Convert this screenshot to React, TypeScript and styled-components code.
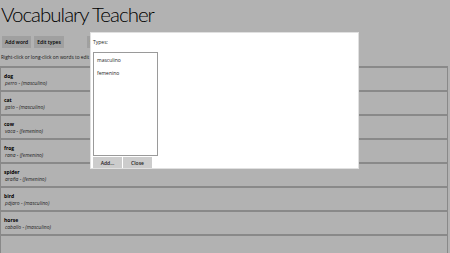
import React from "react";
import styled, { createGlobalStyle } from "styled-components";

const Global = createGlobalStyle`
  html, body { margin: 0; padding: 0; background: #ffffff; }
  body { font-family: "Open Sans", "Noto Sans", sans-serif; color: #000; overflow: hidden; }
`;

const Page = styled.div`
  position: relative;
  width: 450px;
  height: 253px;
  overflow: hidden;
  background: #ffffff;
`;

const Title = styled.h1`
  margin: 0;
  padding: 0 0 0 1px;
  height: 34px;
  font-family: Lato, "Open Sans", sans-serif;
  font-size: 20.5px;
  font-weight: 300;
  letter-spacing: -1px;
  line-height: 28px;
  color: #000;
`;

const Toolbar = styled.div`
  display: flex;
  gap: 3px;
  padding-left: 2px;
  height: 12px;
  margin-top: 2px;
`;

const ToolButton = styled.button<{ $gapBefore?: number; $accent?: boolean }>`
  border: none;
  margin: 0 0 0 ${(p) => p.$gapBefore ?? 0}px;
  padding: 0 3px;
  height: 12px;
  background: #e6e6e6;
  font-family: inherit;
  font-size: 5px;
  font-weight: 600;
  color: ${(p) => (p.$accent ? "#107c10" : "#000")};
`;

const Hint = styled.div`
  margin-top: 4px;
  height: 14px;
  padding-left: 1px;
  font-size: 4.8px;
  line-height: 10px;
  color: #222;
  white-space: nowrap;
`;

const List = styled.div`
  display: flex;
  flex-direction: column;
  margin-right: 2px;
`;

const Row = styled.div`
  height: 17px;
  border-top: 2px solid #c4c4c4;
  border-left: 1px solid #c4c4c4;
  border-right: 1px solid #c4c4c4;
  padding: 5px 0 0 3px;
  box-sizing: content-box;
  display: flex;
  flex-direction: column;
`;

const Word = styled.div`
  font-size: 5px;
  font-weight: 700;
  line-height: 7px;
`;

const Translation = styled.div`
  font-size: 5px;
  line-height: 7px;
  padding-left: 1px;
  font-style: italic;
  color: #333;
`;

const Overlay = styled.div`
  position: absolute;
  inset: 0;
  background: rgba(0, 0, 0, 0.3);
`;

const Dialog = styled.div`
  position: absolute;
  left: 90px;
  top: 32px;
  width: 269px;
  height: 137px;
  background: #ffffff;
  border: 1px solid #e0e0e0;
  padding: 6px 0 0 2px;
  box-sizing: border-box;
  display: flex;
  flex-direction: column;
`;

const Label = styled.div`
  font-size: 5px;
  line-height: 7px;
  height: 13px;
  color: #222;
`;

const ListBox = styled.div`
  width: 65px;
  height: 105px;
  box-sizing: border-box;
  border: 1px solid #9a9a9a;
  padding: 4px 0 0 3px;
  display: flex;
  flex-direction: column;
  gap: 6px;
`;

const ListItem = styled.div`
  font-size: 5px;
  line-height: 7px;
  color: #222;
`;

const DialogButtons = styled.div`
  display: flex;
  gap: 1px;
  margin-top: 1px;
`;

const DialogButton = styled.button`
  border: none;
  margin: 0;
  padding: 0;
  width: 29px;
  height: 11px;
  background: #cccccc;
  font-family: inherit;
  font-size: 5px;
  font-weight: 600;
  color: #222;
`;

const words = [
  { w: "dog", t: "perro", g: "masculino" },
  { w: "cat", t: "gato", g: "masculino" },
  { w: "cow", t: "vaca", g: "femenino" },
  { w: "frog", t: "rana", g: "femenino" },
  { w: "spider", t: "araña", g: "femenino" },
  { w: "bird", t: "pájaro", g: "masculino" },
  { w: "horse", t: "caballo", g: "masculino" },
];

export default function App() {
  return (
    <Page>
      <Global />
      <Title>Vocabulary Teacher</Title>
      <Toolbar>
        <ToolButton>Add word</ToolButton>
        <ToolButton>Edit types</ToolButton>
        <ToolButton $gapBefore={20} $accent>
          Study
        </ToolButton>
      </Toolbar>
      <Hint>Right-click or long-click on words to edit them.</Hint>
      <List>
        {words.map((x) => (
          <Row key={x.w}>
            <Word>{x.w}</Word>
            <Translation>
              {x.t} - ({x.g})
            </Translation>
          </Row>
        ))}
        <Row />
      </List>
      <Overlay />
      <Dialog>
        <Label>Types:</Label>
        <ListBox>
          <ListItem>masculino</ListItem>
          <ListItem>femenino</ListItem>
        </ListBox>
        <DialogButtons>
          <DialogButton>Add...</DialogButton>
          <DialogButton>Close</DialogButton>
        </DialogButtons>
      </Dialog>
    </Page>
  );
}
